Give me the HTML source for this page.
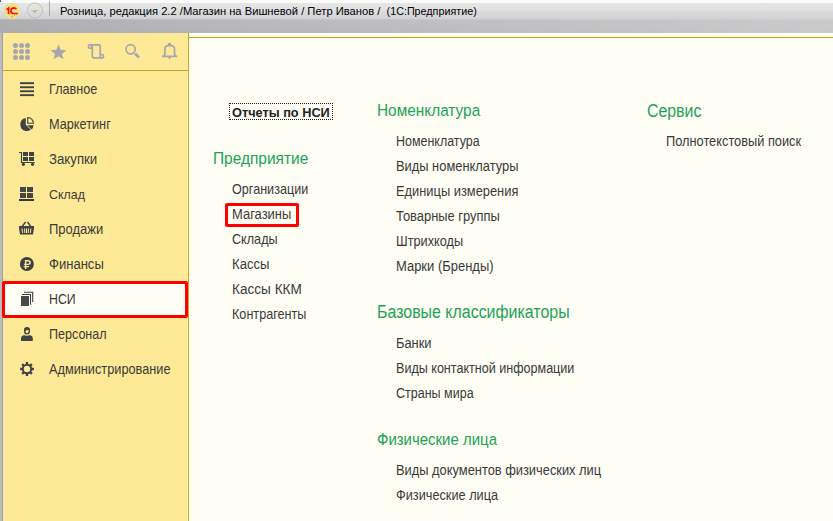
<!DOCTYPE html>
<html><head><meta charset="utf-8">
<style>
*{margin:0;padding:0;box-sizing:border-box}
html,body{width:833px;height:521px;overflow:hidden;background:#fefef5;font-family:"Liberation Sans",sans-serif}
#title{position:absolute;left:0;top:0;width:833px;height:33px;
 background:linear-gradient(#fbfbf7 0px,#fbfbf7 2.5px,#e6e6e8 3px,#e2e2e4 10px,#dadadc 12px,#d6d6d8 17px,#d0d0d2 19px,#bebec0 20px,#bbbbbd 33px)}
#tshade{position:absolute;left:0;top:19px;width:833px;height:14px;
 background:linear-gradient(90deg,rgba(0,0,0,0.08),rgba(0,0,0,0.03) 25%,rgba(0,0,0,0.0) 45%,rgba(255,255,255,0.2))}
#ttext{position:absolute;left:60px;top:4px;font-size:11.2px;color:#000;white-space:pre;line-height:14px}
#lborder{position:absolute;left:0;top:33px;width:3px;height:488px;background:#bcbcc0;border-right:1px solid #a0a0a6}
#side{position:absolute;left:3px;top:33px;width:185px;height:488px;background:#feea96}
#sideline{position:absolute;left:188px;top:33px;width:1px;height:488px;background:#c5a817}
#topline{position:absolute;left:189px;top:37px;width:644px;height:1px;background:#c5a817}
#toolline{position:absolute;left:3px;top:70px;width:185px;height:1px;background:#c5a817}
.mi{position:absolute;left:49px;transform:scaleY(1.1);transform-origin:0 0;font-size:12.8px;line-height:14px;color:#3a3a3a;white-space:nowrap}
.h{position:absolute;transform:scaleY(1.12);transform-origin:0 0;font-size:15.3px;line-height:16px;color:#22a255;white-space:nowrap}
.it{position:absolute;transform:scaleY(1.1);transform-origin:0 0;font-size:12.7px;line-height:14px;color:#3a3a3a;white-space:nowrap}
#nsi{position:absolute;left:2px;top:281px;width:186px;height:37px;border:3px solid #ff0000;border-radius:2px;background:#fefef5}
#mag{position:absolute;left:225px;top:203px;width:74px;height:24px;border:3px solid #ff0000;border-radius:2px}
#otch{position:absolute;left:229px;top:103px;width:104px;height:17px;border:1px dotted #222}
#otcht{position:absolute;left:232px;top:106px;font-weight:bold;font-size:12.75px;line-height:14px;color:#222;white-space:nowrap}
svg{position:absolute;overflow:visible}
</style></head><body>
<div id="title"></div>
<div id="tshade"></div>
<svg width="60" height="33" style="left:0;top:0">
  <rect x="0" y="0" width="1" height="2" fill="#555"/>
  <circle cx="12" cy="11" r="8" fill="#efe08a"/>
  <path d="M6.6 9.6 L8.6 8 L8.6 14.2" stroke="#ff1010" stroke-width="1.7" fill="none"/>
  <path d="M16.3 9.2 Q15.5 7.9 13.6 7.9 Q10.9 8.2 10.9 11 Q10.9 13.5 13.6 13.5 L17.8 13.5" stroke="#ff1010" stroke-width="1.7" fill="none"/>
  <path d="M11 17.2 L12.6 16.4 M14 15.8 L15 15.2 M16.2 14.8 L17.4 14.2" stroke="#a89020" stroke-width="0.8"/>
  <circle cx="35" cy="10.5" r="7.5" fill="none" stroke="#bdbdbd" stroke-width="1"/>
  <circle cx="31" cy="9.5" r="0.7" fill="#f0e070"/>
  <circle cx="34.5" cy="8.5" r="0.7" fill="#f0e070"/>
  <circle cx="36.5" cy="6.5" r="0.7" fill="#f0e070"/>
  <circle cx="39.5" cy="7.5" r="0.7" fill="#f0e070"/>
  <circle cx="39.5" cy="9.5" r="0.7" fill="#f0e070"/>
  <circle cx="32.5" cy="12.5" r="0.7" fill="#f0e070"/>
  <path d="M30.8 10 L38.2 10 L34.5 13.6 Z" fill="#c4c4c0"/><circle cx="34.5" cy="11.4" r="0.6" fill="#a09860"/><circle cx="36.5" cy="10.5" r="0.6" fill="#a09860"/>
  <line x1="49.5" y1="1" x2="49.5" y2="16" stroke="#a8a8aa"/>
</svg>
<div id="ttext">Розница, редакция 2.2 /Магазин на Вишневой / Петр Иванов /  <span style="font-size:10.75px">(1С:Предприятие)</span></div>

<div id="lborder"></div>
<div id="side"></div>
<div id="sideline"></div>
<div style="position:absolute;left:187px;top:71px;width:1px;height:450px;background:#fff0a6"></div>
<div id="topline"></div>
<div id="toolline"></div>

<!-- toolbar icons -->
<svg width="188" height="37" style="left:0;top:33px" fill="#a6a6b0">
  <g transform="translate(0,-33)">
  <circle cx="15.5" cy="45.5" r="2.5"/><circle cx="21.5" cy="45.5" r="2.5"/><circle cx="27.5" cy="45.5" r="2.5"/>
  <circle cx="15.5" cy="51.5" r="2.5"/><circle cx="21.5" cy="51.5" r="2.5"/><circle cx="27.5" cy="51.5" r="2.5"/>
  <circle cx="15.5" cy="57.5" r="2.5"/><circle cx="21.5" cy="57.5" r="2.5"/><circle cx="27.5" cy="57.5" r="2.5"/>
  <path d="M58.5 44.3 L60.6 49.8 L66.4 50.2 L61.9 53.9 L63.6 59.3 L58.5 56.2 L53.4 59.3 L55.1 53.9 L50.6 50.2 L56.4 49.8 Z"/>
  <g fill="none" stroke="#a6a6b0" stroke-width="1.7">
   <path d="M90 44.8 L99 44.8 Q100.2 44.8 100.2 46 L100.2 55"/>
   <path d="M92.3 46.5 L92.3 56.5 Q92.3 57.8 93.5 57.8 L101.5 57.8"/>
   <circle cx="90.2" cy="46.4" r="1.7"/>
   <circle cx="101.8" cy="56.2" r="1.7"/>
   <circle cx="130.6" cy="49.3" r="4.6"/>
   <path d="M164.9 48.8 Q164.9 45.4 169.7 45.3 Q174.5 45.4 174.5 48.8 L174.5 54.2 Q174.8 55.3 176.6 56.4 L162.8 56.4 Q164.6 55.3 164.9 54.2 Z" stroke-linejoin="round"/>
  </g>
  <path d="M134 54.5 L136 52.5 L140 56.5 L138 58.5 Z"/>
  <rect x="168" y="43" width="3" height="2"/>
  <path d="M168 57 L171 57 L169.5 59.7 Z"/>
  </g>
</svg>

<div id="nsi"></div>

<!-- sidebar icons -->
<svg width="40" height="320" style="left:0;top:70px" fill="#3f4246">
 <g transform="translate(0,-70)">
  <rect x="20" y="82.2" width="14" height="1.9"/>
  <rect x="20" y="86.3" width="14" height="1.9"/>
  <rect x="20" y="90.3" width="14" height="1.9"/>
  <rect x="20" y="94.2" width="14" height="1.9"/>
  <!-- pie -->
  <path d="M25.8 118 L25.8 124.8 L30.8 129.8 A7 7 0 0 1 25.8 131 A6.6 6.6 0 0 1 25.8 118 Z" />
  <path d="M27.2 125.2 L33.6 125.2 A7 7 0 0 1 31.6 129.5 Z"/>
  <path d="M27.7 117.5 L27.7 123.2 L33.4 123.2 A5.8 5.8 0 0 0 27.7 117.5 Z" fill="none" stroke="#3f4246" stroke-width="1.1"/>
  <!-- cart -->
  <path d="M19 152.5 L21.5 152.5 L21.5 162.5 L34.8 162.5" fill="none" stroke="#3f4246" stroke-width="1.2"/>
  <rect x="23" y="152" width="5" height="4"/><rect x="29" y="152" width="5" height="4"/>
  <rect x="23" y="157" width="5" height="4"/><rect x="29" y="157" width="5" height="4"/>
  <circle cx="23.4" cy="164.3" r="1.6"/><circle cx="32.6" cy="164.3" r="1.6"/>
  <!-- sklad -->
  <rect x="20" y="187" width="6" height="5" fill="#464646"/><rect x="27" y="187" width="6" height="5" fill="#464646"/>
  <rect x="20" y="193" width="6" height="5" fill="#464646"/><rect x="27" y="193" width="6" height="5" fill="#464646"/>
  <rect x="19" y="199" width="15" height="2" fill="#363a40"/>
  <!-- basket -->
  <path d="M25.6 222 L22.3 226.2 M27.4 222 L30.7 226.2" stroke="#3f4246" stroke-width="1.4"/>
  <path d="M19 226 L34 226 L34 228 L33 234.5 L20 234.5 L19 228 Z"/>
  <path d="M22 228.5 L22.6 233 M24.6 228.5 L24.8 233 M26.5 228.5 L26.5 233 M28.4 228.5 L28.2 233 M30.9 228.5 L30.3 233" stroke="#feea96" stroke-width="1"/>
  <!-- ruble -->
  <circle cx="26.9" cy="264" r="7"/>
  <path d="M25.6 269 L25.6 260.8 L28 260.8 Q30.2 260.8 30.2 262.6 Q30.2 264.4 28 264.4 L24.2 264.4 M23.7 266.6 L29 266.6" stroke="#feea96" stroke-width="1.4" fill="none"/>
  <!-- nsi -->
  <rect x="21" y="296" width="8" height="10" fill="#484a4a"/>
  <path d="M22 294.5 L30.5 294.5 L30.5 304.7 M24 292.3 L32.7 292.3 L32.7 302" stroke="#3f4246" stroke-width="1.1" fill="none"/>
  <!-- person -->
  <path d="M24 331.5 L24 329.8 Q24 327 27 327 Q30 327 30 329.8 L30 331.5 Q30 334.4 27 334.4 Q24 334.4 24 331.5 Z"/>
  <path d="M25.4 331 Q26.5 329.6 28.6 330 L28.6 331.6 Q28.4 333.3 27 333.3 Q25.6 333.3 25.4 331.6 Z" fill="#feea96"/>
  <path d="M21 341 L21 338.2 Q21 335.6 23.6 335.2 L25 335.2 Q27 336.4 29 335.2 L30.2 335.2 Q32.8 335.6 32.8 338.2 L32.8 341 Z"/>
  <!-- gear -->
  <g transform="translate(27 369)">
   <circle r="4.2" fill="none" stroke="#3f4246" stroke-width="2"/>
   <g stroke="#3f4246" stroke-width="2.3">
    <path d="M0 -4.5 L0 -6.9 M0 4.5 L0 6.9 M-4.5 0 L-6.9 0 M4.5 0 L6.9 0"/>
    <path d="M3.2 -3.2 L4.9 -4.9 M-3.2 3.2 L-4.9 4.9 M-3.2 -3.2 L-4.9 -4.9 M3.2 3.2 L4.9 4.9"/>
   </g>
  </g>
 </g>
</svg>

<div class="mi" style="top:82px;font-size:12.67px">Главное</div>
<div class="mi" style="top:117px;font-size:12.71px">Маркетинг</div>
<div class="mi" style="top:152px;font-size:13.23px">Закупки</div>
<div class="mi" style="top:187px;font-size:12.44px">Склад</div>
<div class="mi" style="top:222px;font-size:13.01px">Продажи</div>
<div class="mi" style="top:257px;font-size:13.05px">Финансы</div>
<div class="mi" style="top:291px;font-size:12.31px;transform:scaleY(1.19)">НСИ</div>
<div class="mi" style="top:327px;font-size:12.55px">Персонал</div>
<div class="mi" style="top:362px;font-size:12.76px">Администрирование</div>

<div id="otch"></div>
<div id="otcht">Отчеты по НСИ</div>

<div class="h" style="left:213px;top:149px;font-size:15.46px">Предприятие</div>
<div class="it" style="left:232px;top:182px;font-size:12.61px">Организации</div>
<div class="it" style="left:232px;top:207px;font-size:12.97px">Магазины</div>
<div class="it" style="left:232px;top:232px;font-size:12.61px">Склады</div>
<div class="it" style="left:232px;top:257px;font-size:13.14px">Кассы</div>
<div class="it" style="left:232px;top:282px;font-size:13.61px">Кассы ККМ</div>
<div class="it" style="left:232px;top:307px;font-size:12.64px">Контрагенты</div>
<div id="mag"></div>

<div class="h" style="left:377px;top:101px;font-size:15.39px">Номенклатура</div>
<div class="it" style="left:396px;top:134px;font-size:12.47px">Номенклатура</div>
<div class="it" style="left:396px;top:159px;font-size:12.89px">Виды номенклатуры</div>
<div class="it" style="left:396px;top:184px;font-size:12.86px">Единицы измерения</div>
<div class="it" style="left:396px;top:209px;font-size:12.93px">Товарные группы</div>
<div class="it" style="left:396px;top:234px;font-size:12.72px">Штрихкоды</div>
<div class="it" style="left:396px;top:259px;font-size:12.97px">Марки (Бренды)</div>

<div class="h" style="left:377px;top:303px;font-size:15.94px">Базовые классификаторы</div>
<div class="it" style="left:396px;top:336px;font-size:12.86px">Банки</div>
<div class="it" style="left:396px;top:361px;font-size:12.57px">Виды контактной информации</div>
<div class="it" style="left:396px;top:386px;font-size:12.53px">Страны мира</div>

<div class="h" style="left:377px;top:430px;font-size:14.97px">Физические лица</div>
<div class="it" style="left:396px;top:463px;font-size:12.87px">Виды документов физических лиц</div>
<div class="it" style="left:396px;top:488px;font-size:12.74px">Физические лица</div>

<div class="h" style="left:647px;top:101.5px;font-size:15.87px">Сервис</div>
<div class="it" style="left:666px;top:134px;font-size:12.8px">Полнотекстовый поиск</div>
</body></html>
